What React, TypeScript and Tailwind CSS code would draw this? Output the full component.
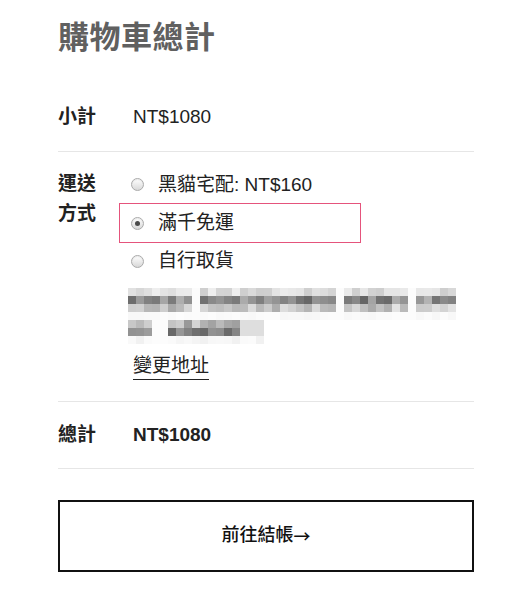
// Cart totals panel · shipping picker + blurred address + checkout button

const FONT = "font-['Liberation_Sans','Noto_Sans_CJK_TC',sans-serif]";

type ShipOption = { label: string; checked?: boolean; highlight?: boolean };

const OPTIONS: ShipOption[] = [
  { label: "黑貓宅配: NT$160" },
  { label: "滿千免運", checked: true, highlight: true },
  { label: "自行取貨" },
];

// deterministic pseudo-random · stands in for the mosaic-blurred address
function makeRng(seed: number) {
  let s = seed;
  return () => {
    s = (s * 1103515245 + 12345) % 2147483648;
    return s / 2147483648;
  };
}

function mosaicRows(
  ranges: [number, number][],
  cols: number,
  gaps: number[],
  seed: number,
  fadeFrom?: number
) {
  const rnd = makeRng(seed);
  return ranges.map(([lo, hi]) =>
    Array.from({ length: cols }, (_, c) => {
      if (gaps.includes(c)) return 252;
      let v = Math.round(lo + rnd() * (hi - lo));
      if (fadeFrom !== undefined && c >= fadeFrom) v = Math.max(v, 222);
      return v;
    })
  );
}

const BLOCK_A = mosaicRows(
  [
    [205, 238],
    [95, 185],
    [170, 228],
    [246, 253],
  ],
  41,
  [8, 26, 35],
  7
);
const BLOCK_B = mosaicRows(
  [
    [150, 215],
    [95, 175],
    [238, 252],
  ],
  17,
  [3, 4],
  19,
  14
);

function Mosaic({ rows }: { rows: number[][] }) {
  return (
    <div className="flex flex-col">
      {rows.map((r, i) => (
        <div key={i} className="flex">
          {r.map((v, j) => (
            <span
              key={j}
              className="block w-[8px] h-[8px]"
              style={{ backgroundColor: `rgb(${v},${v},${v})` }}
            />
          ))}
        </div>
      ))}
    </div>
  );
}

function Radio({ checked }: { checked?: boolean }) {
  return (
    <span className="w-[13px] h-[13px] rounded-full border border-[#aaaaaa] bg-[linear-gradient(to_bottom,#ffffff,#d8d8d8)] shadow-[inset_0_1px_1px_rgba(0,0,0,0.08)] flex items-center justify-center shrink-0">
      {checked && <span className="w-[5px] h-[5px] rounded-full bg-[#4a4a4a]" />}
    </span>
  );
}

export default function App() {
  return (
    <div className={`${FONT} bg-white w-[513px] h-[600px] text-[#222]`}>
      <div className="ml-[58px] w-[416px] pt-[18px]">
        <h2 className="text-[31px] leading-[40px] font-bold text-[#606060] mb-[25px] tracking-[0.5px]">
          購物車總計
        </h2>

        {/* 小計 */}
        <div className="flex border-b border-[#e6e6e6] py-[19px] text-[19px] leading-[30px]">
          <span className="w-[75px] font-semibold">小計</span>
          <span>NT$1080</span>
        </div>

        {/* 運送方式 */}
        <div className="flex border-b border-[#e6e6e6] pb-[20px] text-[19px]">
          <span className="w-[75px] font-semibold leading-[30px] pt-[17px]">
            運送
            <br />
            方式
          </span>
          <div className="flex-1 pt-[13px]">
            <ul>
              {OPTIONS.map((o, i) =>
                o.highlight ? (
                  <li
                    key={o.label}
                    className="-ml-[14px] pl-[11px] w-[242px] h-[40px] -my-[1px] border border-[#e5537c] flex items-center gap-[14px]"
                  >
                    <Radio checked={o.checked} />
                    <span className="leading-[30px]">{o.label}</span>
                  </li>
                ) : (
                  <li
                    key={o.label}
                    className={`-ml-[2px] flex items-center gap-[14px] ${i === 0 ? "h-[39px]" : "h-[38px]"}`}
                  >
                    <Radio checked={o.checked} />
                    <span className="leading-[30px]">{o.label}</span>
                  </li>
                )
              )}
            </ul>
            <div className="-ml-[5px] mt-[8px]">
              <Mosaic rows={BLOCK_A} />
              <Mosaic rows={BLOCK_B} />
            </div>
            <a className="inline-block mt-[10px] leading-[24px] pb-[1px] border-b border-[#222] text-[19px]">
              變更地址
            </a>
          </div>
        </div>

        {/* 總計 */}
        <div className="flex border-b border-[#e6e6e6] py-[18px] text-[19px] leading-[30px] font-semibold">
          <span className="w-[75px]">總計</span>
          <span className="font-bold">NT$1080</span>
        </div>

        <button className="mt-[31px] w-full h-[72px] border-2 border-[#111] bg-white text-[18px] font-medium text-[#111] flex items-center justify-center">
          前往結帳
          <span className="font-['Noto_Sans_CJK_TC',sans-serif] text-[17px]">→</span>
        </button>
      </div>
    </div>
  );
}
